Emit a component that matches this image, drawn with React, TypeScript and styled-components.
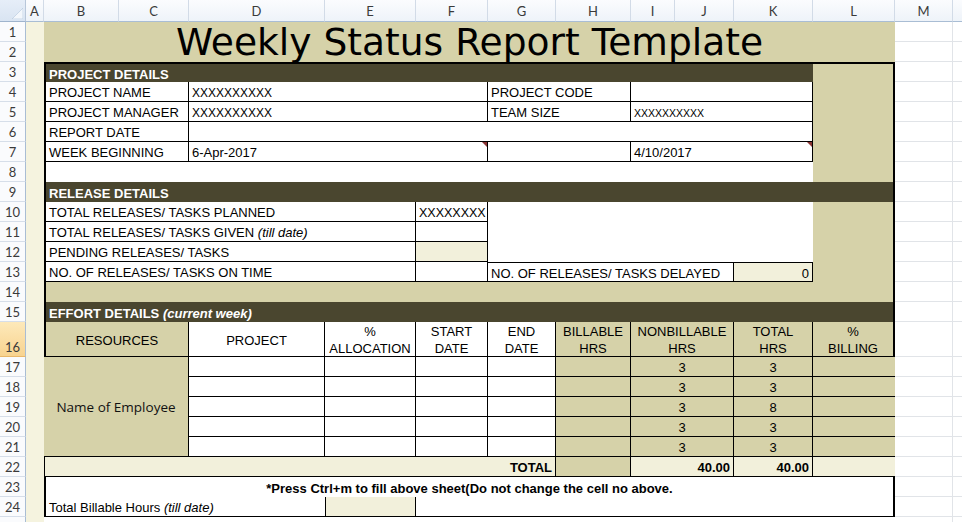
import React from 'react';
import styled, { createGlobalStyle } from 'styled-components';

const GlobalStyle = createGlobalStyle`
  html, body { margin: 0; padding: 0; background: #ffffff; }
  body { font-family: "Liberation Sans", Arial, sans-serif; overflow: hidden; }
`;

const COLS = ['HDR', 'A', 'B', 'C', 'D', 'E', 'F', 'G', 'H', 'I', 'J', 'K', 'L', 'M', 'N'];
const WIDTHS = [26, 18, 75, 70, 136, 91, 72, 68, 75, 44, 59, 79, 82, 58, 60];
const HEIGHTS = [22, ...Array(15).fill(20), 35, ...Array(9).fill(20)];

const ci = (l: string) => COLS.indexOf(l) + 1;

const area = (ref: string) => {
  const [a, b = a] = ref.split(':');
  const m1 = a.match(/^([A-Z]+)(\d+)$/)!;
  const m2 = b.match(/^([A-Z]+)(\d+)$/)!;
  return `${+m1[2] + 1} / ${ci(m1[1])} / ${+m2[2] + 2} / ${ci(m2[1]) + 1}`;
};

type Fill = 'white' | 'tan' | 'dark' | 'cream' | 'gutter';
const FILL: Record<Fill, string> = {
  white: '#ffffff',
  tan: '#d6d2a9',
  dark: '#4a462f',
  cream: '#f2f0db',
  gutter: '#f5f3df',
};

const Sheet = styled.div`
  display: grid;
  grid-template-columns: ${WIDTHS.map((w) => `${w}px`).join(' ')};
  grid-template-rows: ${HEIGHTS.map((h) => `${h}px`).join(' ')};
  width: 962px;
  height: 522px;
  overflow: hidden;
  background: #ffffff;
`;

const Corner = styled.div`
  grid-area: 1 / 1 / 2 / 2;
  box-sizing: border-box;
  background: linear-gradient(#e6eef8, #d9e4f2);
  border-right: 1px solid #b8c7da;
  border-bottom: 1px solid #9fb4cd;
  display: flex;
  align-items: flex-end;
  justify-content: flex-end;
  padding: 0 2px 2px 0;
`;

const ColHeader = styled.div<{ $col: number }>`
  grid-area: 1 / ${(p) => p.$col} / 2 / ${(p) => p.$col + 1};
  box-sizing: border-box;
  background: linear-gradient(#fbfcfe, #eef3f9);
  border-right: 1px solid #d2dbe7;
  border-bottom: 1px solid #a9bdd4;
  display: flex;
  align-items: center;
  justify-content: center;
  font-family: Lato, "Open Sans", sans-serif;
  font-size: 13px;
  color: #3a3a3a;
`;

const RowHeader = styled.div<{ $row: number; $active?: boolean }>`
  grid-area: ${(p) => p.$row + 1} / 1 / ${(p) => p.$row + 2} / 2;
  box-sizing: border-box;
  background: ${(p) => (p.$active ? 'linear-gradient(#fde9ba, #f8d38f)' : '#fafbfd')};
  border-right: 1px solid #a9bdd4;
  border-bottom: 1px solid ${(p) => (p.$active ? '#e9b86a' : '#d6dee9')};
  display: flex;
  align-items: ${(p) => (p.$active ? 'flex-end' : 'center')};
  justify-content: center;
  padding-bottom: ${(p) => (p.$active ? '1px' : '0')};
  font-family: Lato, "Open Sans", sans-serif;
  font-size: 13px;
  color: #3a3a3a;
`;

const Gutter = styled.div`
  grid-area: 2 / 2 / 27 / 3;
  background: ${FILL.gutter};
`;

const Blank = styled.div<{ $area: string }>`
  grid-area: ${(p) => p.$area};
  box-sizing: border-box;
  border-right: 1px solid #e1e4e8;
  border-bottom: 1px solid #e1e4e8;
  background: #ffffff;
`;

const TitleBand = styled.div`
  grid-area: ${area('B1:L2')};
  background: ${FILL.tan};
  display: flex;
  justify-content: center;
  align-items: flex-start;
  padding-top: 6px;
`;

const Title = styled.h1`
  margin: 0;
  font-family: "DejaVu Sans", Verdana, sans-serif;
  font-weight: 400;
  font-size: 37.6px;
  line-height: 28px;
  color: #000000;
  white-space: nowrap;
`;

type Align = 'left' | 'center' | 'right';

const Cell = styled.div<{ $area: string; $fill: Fill; $b: string; $align: Align; $bold?: boolean }>`
  grid-area: ${(p) => p.$area};
  position: relative;
  box-sizing: border-box;
  display: flex;
  align-items: center;
  justify-content: ${(p) => (p.$align === 'right' ? 'flex-end' : p.$align === 'center' ? 'center' : 'flex-start')};
  text-align: ${(p) => p.$align};
  padding: 2px 3px 0;
  background: ${(p) => FILL[p.$fill]};
  border: 0 solid #000000;
  border-width: ${(p) => p.$b.split('').map((d) => `${d}px`).join(' ')};
  font-size: 13px;
  line-height: 17px;
  color: ${(p) => (p.$fill === 'dark' ? '#ffffff' : '#000000')};
  font-weight: ${(p) => (p.$bold ? 700 : 400)};
  white-space: nowrap;
  overflow: hidden;
`;

const Xs = styled.span<{ $size: number }>`
  font-size: ${(p) => p.$size}px;
`;

const Employee = styled.span`
  font-family: "Open Sans", sans-serif;
  font-size: 13.5px;
  color: #111111;
`;

const Flag = styled.span`
  position: absolute;
  top: 0;
  right: 0;
  width: 0;
  height: 0;
  border-top: 5px solid #8a3434;
  border-left: 5px solid transparent;
`;

const C: React.FC<{
  at: string;
  fill?: Fill;
  b?: string;
  align?: Align;
  bold?: boolean;
  flag?: boolean;
  children?: React.ReactNode;
}> = ({ at, fill = 'white', b = '0110', align = 'left', bold, flag, children }) => (
  <Cell $area={area(at)} $fill={fill} $b={b} $align={align} $bold={bold}>
    {children !== undefined && <span>{children}</span>}
    {flag && <Flag />}
  </Cell>
);

const effortRows = [
  { r: 17, total: '3' },
  { r: 18, total: '3' },
  { r: 19, total: '8' },
  { r: 20, total: '3' },
  { r: 21, total: '3' },
];

export default function App() {
  const letters = COLS.slice(1);
  const rows = Array.from({ length: 25 }, (_, i) => i + 1);
  return (
    <>
      <GlobalStyle />
      <Sheet>
        <Corner>
          <svg width="11" height="11" viewBox="0 0 11 11">
            <polygon points="11,0 11,11 0,11" fill="#f3f7fc" stroke="#b4c6dc" strokeWidth="0.6" />
          </svg>
        </Corner>
        {letters.map((l) => (
          <ColHeader key={l} $col={ci(l)}>
            {l === 'N' ? '' : l}
          </ColHeader>
        ))}
        {rows.map((r) => (
          <RowHeader key={r} $row={r} $active={r === 16}>
            {r <= 24 ? r : ''}
          </RowHeader>
        ))}
        <Gutter />
        {rows.map((r) => (
          <React.Fragment key={`blank-${r}`}>
            <Blank $area={area(`M${r}`)} />
            <Blank $area={area(`N${r}`)} />
          </React.Fragment>
        ))}

        {/* Title */}
        <TitleBand>
          <Title>Weekly Status Report Template</Title>
        </TitleBand>

        {/* Project details */}
        <C at="B3:K3" fill="dark" b="2002" bold>PROJECT DETAILS</C>
        <C at="L3:L8" fill="tan" b="2200" />
        <C at="B4:C4" b="0112">PROJECT NAME</C>
        <C at="D4:F4"><Xs $size={12}>XXXXXXXXXX</Xs></C>
        <C at="G4:H4">PROJECT CODE</C>
        <C at="I4:K4" />
        <C at="B5:C5" b="0112">PROJECT MANAGER</C>
        <C at="D5:F5"><Xs $size={12}>XXXXXXXXXX</Xs></C>
        <C at="G5:H5">TEAM SIZE</C>
        <C at="I5:K5"><Xs $size={10.5}>XXXXXXXXXX</Xs></C>
        <C at="B6:C6" b="0112">REPORT DATE</C>
        <C at="D6:K6" />
        <C at="B7:C7" b="0112">WEEK BEGINNING</C>
        <C at="D7:F7" flag>6-Apr-2017</C>
        <C at="G7:H7" />
        <C at="I7:K7" flag>4/10/2017</C>
        <C at="B8:K8" b="0002" />

        {/* Release details */}
        <C at="B9:L9" fill="dark" b="0202" bold>RELEASE DETAILS</C>
        <C at="B10:E10" b="0112">TOTAL RELEASES/ TASKS PLANNED</C>
        <C at="F10"><Xs $size={12.5}>XXXXXXXX</Xs></C>
        <C at="G10:K12" b="0000" />
        <C at="L10:L13" fill="tan" b="0200" />
        <C at="B11:E11" b="0112">
          TOTAL RELEASES/ TASKS GIVEN <i>(till date)</i>
        </C>
        <C at="F11" />
        <C at="B12:E12" b="0112">PENDING RELEASES/ TASKS</C>
        <C at="F12" fill="cream" />
        <C at="B13:E13" b="0112">NO. OF RELEASES/ TASKS ON TIME</C>
        <C at="F13" />
        <C at="G13:J13" b="1110">NO. OF RELEASES/ TASKS DELAYED</C>
        <C at="K13" fill="cream" b="1110" align="right">0</C>
        <C at="B14:L14" fill="tan" b="0202" />

        {/* Effort details */}
        <C at="B15:L15" fill="dark" b="0202" bold>
          EFFORT DETAILS <i>(current week)</i>
        </C>
        <C at="B16:C16" fill="tan" b="0112" align="center">RESOURCES</C>
        <C at="D16" align="center">PROJECT</C>
        <C at="E16" align="center">%<br />ALLOCATION</C>
        <C at="F16" align="center">START<br />DATE</C>
        <C at="G16" align="center">END<br />DATE</C>
        <C at="H16" fill="tan" align="center">BILLABLE<br />HRS</C>
        <C at="I16:J16" fill="tan" align="center">NONBILLABLE<br />HRS</C>
        <C at="K16" fill="tan" align="center">TOTAL<br />HRS</C>
        <C at="L16" fill="tan" b="0210" align="center">%<br />BILLING</C>
        <C at="B17:C21" fill="tan" b="0110" align="center">
          <Employee>Name of Employee</Employee>
        </C>
        {effortRows.map(({ r, total }) => (
          <React.Fragment key={r}>
            <C at={`D${r}`} />
            <C at={`E${r}`} />
            <C at={`F${r}`} />
            <C at={`G${r}`} />
            <C at={`H${r}`} fill="tan" />
            <C at={`I${r}:J${r}`} fill="tan" align="center">3</C>
            <C at={`K${r}`} fill="tan" align="center">{total}</C>
            <C at={`L${r}`} fill="tan" b="0010" />
          </React.Fragment>
        ))}
        <C at="B22:G22" fill="cream" b="0111" align="right" bold>TOTAL</C>
        <C at="H22" fill="tan" />
        <C at="I22:J22" fill="cream" align="right" bold>40.00</C>
        <C at="K22" fill="cream" align="right" bold>40.00</C>
        <C at="L22" fill="cream" b="0010" />
        <C at="B23:L23" b="0202" align="center" bold>
          *Press Ctrl+m to fill above sheet(Do not change the cell no above.
        </C>
        <C at="B24:D24" b="0012">
          Total Billable Hours <i>(till date)</i>
        </C>
        <C at="E24" fill="cream" b="0111" />
        <C at="F24:L24" b="0210" />
        <C at="B25:L25" b="0000" />
      </Sheet>
    </>
  );
}
